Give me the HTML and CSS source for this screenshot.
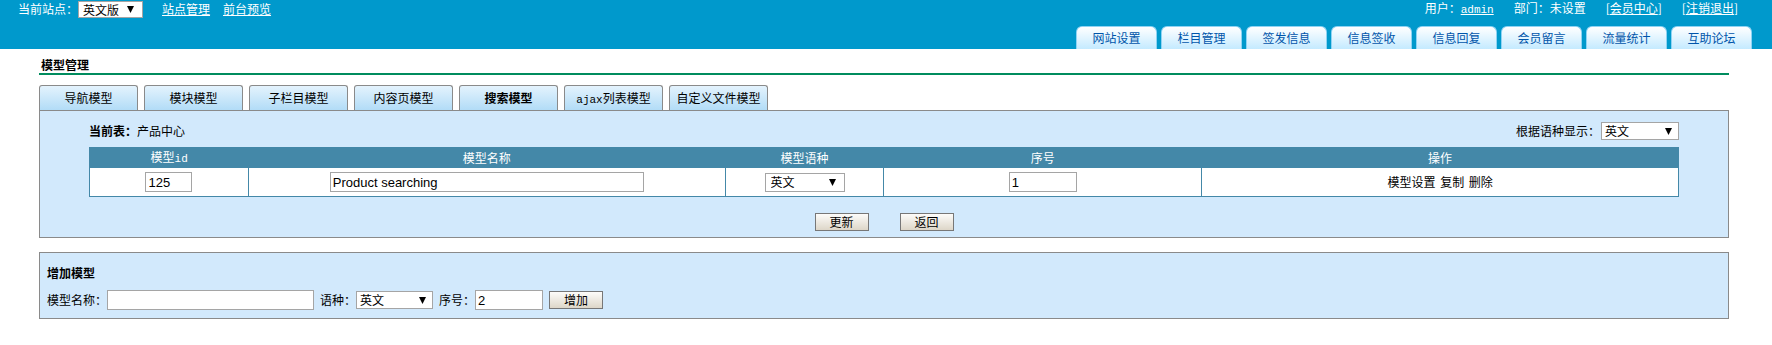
FILE: index.html
```html
<!DOCTYPE html>
<html>
<head>
    <meta charset="utf-8">
    <title>模型管理</title>
    <link rel="stylesheet" href="styles.css">
</head>
<body>
    <div class="topbar">
        <div class="topline">
            <div class="site">
                当前站点：<select class="sel site-sel">
                    <option>英文版</option>
                    <option>中文版</option>
                </select>
                <a href="#" class="toplink first">站点管理</a>
                <a href="#" class="toplink">前台预览</a>
            </div>
            <div class="user">
                <span>用户：<a href="#" class="mono">admin</a></span>
                <span>部门：未设置</span>
                <span>[<a href="#">会员中心</a>]</span>
                <span>[<a href="#">注销退出</a>]</span>
            </div>
        </div>
        <ul class="nav">
            <li><a href="#">网站设置</a></li>
            <li><a href="#">栏目管理</a></li>
            <li><a href="#">签发信息</a></li>
            <li><a href="#">信息签收</a></li>
            <li><a href="#">信息回复</a></li>
            <li><a href="#">会员留言</a></li>
            <li><a href="#">流量统计</a></li>
            <li><a href="#">互助论坛</a></li>
        </ul>
    </div>

    <div class="main">
        <h3 class="title">模型管理</h3>

        <ul class="tabs">
            <li>导航模型</li>
            <li>模块模型</li>
            <li>子栏目模型</li>
            <li>内容页模型</li>
            <li class="active">搜索模型</li>
            <li><span class="mono">ajax</span>列表模型</li>
            <li>自定义文件模型</li>
        </ul>

        <form class="panel" action="#" method="post">
            <div class="panel-head">
                <div><b>当前表：</b>产品中心</div>
                <div class="filter">
                    根据语种显示：<select class="sel lang-filter">
                        <option>英文</option>
                        <option>中文</option>
                    </select>
                </div>
            </div>

            <table class="list">
                <colgroup>
                    <col style="width: 10%">
                    <col style="width: 30%">
                    <col style="width: 10%">
                    <col style="width: 20%">
                    <col style="width: 30%">
                </colgroup>
                <tr>
                    <th>模型<span class="mono">id</span></th>
                    <th>模型名称</th>
                    <th>模型语种</th>
                    <th>序号</th>
                    <th>操作</th>
                </tr>
                <tr>
                    <td><input type="text" class="txt id-input" value="125"></td>
                    <td><input type="text" class="txt name-input" value="Product searching"></td>
                    <td>
                        <select class="sel lang-sel">
                            <option>英文</option>
                            <option>中文</option>
                        </select>
                    </td>
                    <td><input type="text" class="txt order-input" value="1"></td>
                    <td class="ops">
                        <a href="#">模型设置</a>
                        <a href="#">复制</a>
                        <a href="#">删除</a>
                    </td>
                </tr>
            </table>

            <div class="btn-row">
                <input type="submit" class="btn" value="更新">
                <input type="button" class="btn" value="返回">
            </div>
        </form>

        <form class="panel add-panel" action="#" method="post">
            <div class="add-title">增加模型</div>
            <div class="add-row">
                <label>模型名称：</label>
                <input type="text" class="txt add-name">
                <label class="gap">语种：</label>
                <select class="sel add-lang">
                    <option>英文</option>
                    <option>中文</option>
                </select>
                <label class="gap">序号：</label>
                <input type="text" class="txt order-input" value="2">
                <input type="submit" class="btn gap" value="增加">
            </div>
        </form>
    </div>
</body>
</html>
```

FILE: styles.css
```css
body {
    margin: 0;
    background-color: #fff;
    font-family: "Noto Sans CJK SC", "Liberation Sans", sans-serif;
    font-size: 12px;
    line-height: 16px;
    color: #000;
}

a {
    color: #000;
    text-decoration: none;
}

ul {
    list-style: none;
    margin: 0;
    padding: 0;
}

.mono {
    font-family: "Liberation Mono", monospace;
    font-size: 11px;
}

.sel {
    -webkit-appearance: none;
    appearance: none;
    box-sizing: border-box;
    height: 18px;
    padding: 0 0 0 3px;
    border: 1px solid #a5a5a5;
    border-radius: 0;
    background: #fff url("data:image/svg+xml,%3Csvg xmlns='http://www.w3.org/2000/svg' width='7' height='7'%3E%3Cpath d='M0 0h7L3.5 7z'/%3E%3C/svg%3E") no-repeat right 6px center;
    font-family: "Noto Sans CJK SC", sans-serif;
    font-size: 12px;
    line-height: 16px;
    color: #000;
}

.txt {
    box-sizing: border-box;
    height: 20px;
    padding: 0 2px;
    border: 1px solid #a5a5a5;
    background-color: #fff;
    font-family: "Liberation Sans", sans-serif;
    font-size: 13px;
    color: #000;
}

.btn {
    box-sizing: border-box;
    width: 54px;
    height: 18px;
    padding: 0;
    border: 1px solid #777;
    background: linear-gradient(#fdfcfa, #ddd6c8);
    font-family: "Noto Sans CJK SC", sans-serif;
    font-size: 12px;
    line-height: 16px;
    color: #000;
}

/* top bar */
.topbar {
    height: 49px;
    background-color: #0099cc;
    display: flex;
    flex-direction: column;
    justify-content: space-between;
    color: #fff;
}

.topline {
    display: flex;
    justify-content: space-between;
    align-items: center;
    height: 18px;
    padding: 0 34px 0 18px;
}

.site {
    display: flex;
    align-items: center;
}

.site-sel {
    width: 65px;
    height: 17px;
    padding-left: 4px;
    background-position: right 8px center;
}

.toplink {
    color: #fff;
    text-decoration: underline;
    margin-left: 13px;
}

.toplink.first {
    margin-left: 19px;
}

.user {
    display: flex;
    gap: 20px;
}

.user a {
    color: #fff;
    text-decoration: underline;
}

.nav {
    display: flex;
    justify-content: flex-end;
    gap: 4px;
    padding-right: 20px;
}

.nav li {
    box-sizing: border-box;
    width: 81px;
    height: 23px;
    border: 1px solid #8fd3f3;
    border-bottom: none;
    border-radius: 6px 6px 0 0;
    background: linear-gradient(#ffffff, #c4eaff);
    text-align: center;
    line-height: 22px;
}

.nav a {
    color: #0055aa;
}

/* main */
.main {
    margin: 0 43px 0 39px;
}

.title {
    margin: 8px 0 0;
    padding-left: 2px;
    font-size: 12px;
    line-height: 16px;
    border-bottom: 2px solid #008c5e;
}

.tabs {
    display: flex;
    gap: 6px;
    margin-top: 10px;
}

.tabs li {
    box-sizing: border-box;
    width: 99px;
    height: 25px;
    border: 1px solid #8a8a8a;
    border-bottom: none;
    border-radius: 3px 3px 0 0;
    background: linear-gradient(#e4f3fd, #b2dcf7);
    text-align: center;
    line-height: 24px;
}

.tabs li.active {
    font-weight: bold;
}

.panel {
    margin: 0;
    border: 1px solid #8a8a8a;
    background-color: #d2e9fc;
    padding-bottom: 6px;
}

.panel-head {
    display: flex;
    justify-content: space-between;
    align-items: center;
    height: 18px;
    margin: 11px 49px 7px;
}

.filter {
    display: flex;
    align-items: center;
}

.lang-filter {
    width: 78px;
    margin-left: 1px;
}

.list {
    width: calc(100% - 98px);
    margin: 0 49px;
    border-collapse: collapse;
    border: 1px solid #4488a8;
    background-color: #fff;
}

.list th {
    height: 19px;
    padding: 0;
    background-color: #4488a8;
    color: #fff;
    font-weight: normal;
}

.list td {
    height: 28px;
    padding: 0;
    border: 1px solid #4488a8;
    text-align: center;
}

.id-input {
    width: 47px;
}

.name-input {
    width: 314px;
}

.lang-sel {
    width: 80px;
    height: 19px;
    padding-left: 5px;
    background-position: right 8px center;
}

.order-input {
    width: 68px;
}

.ops a {
    margin: 0 1px;
}

.btn-row {
    display: flex;
    justify-content: center;
    gap: 31px;
    margin-top: 16px;
}

/* add model */
.add-panel {
    margin-top: 14px;
    padding: 11px 7px 8px;
}

.add-title {
    font-weight: bold;
    line-height: 18px;
}

.add-row {
    display: flex;
    align-items: center;
    margin-top: 8px;
}

.add-row .gap {
    margin-left: 6px;
}

.add-name {
    width: 207px;
}

.add-lang {
    width: 77px;
}
```
